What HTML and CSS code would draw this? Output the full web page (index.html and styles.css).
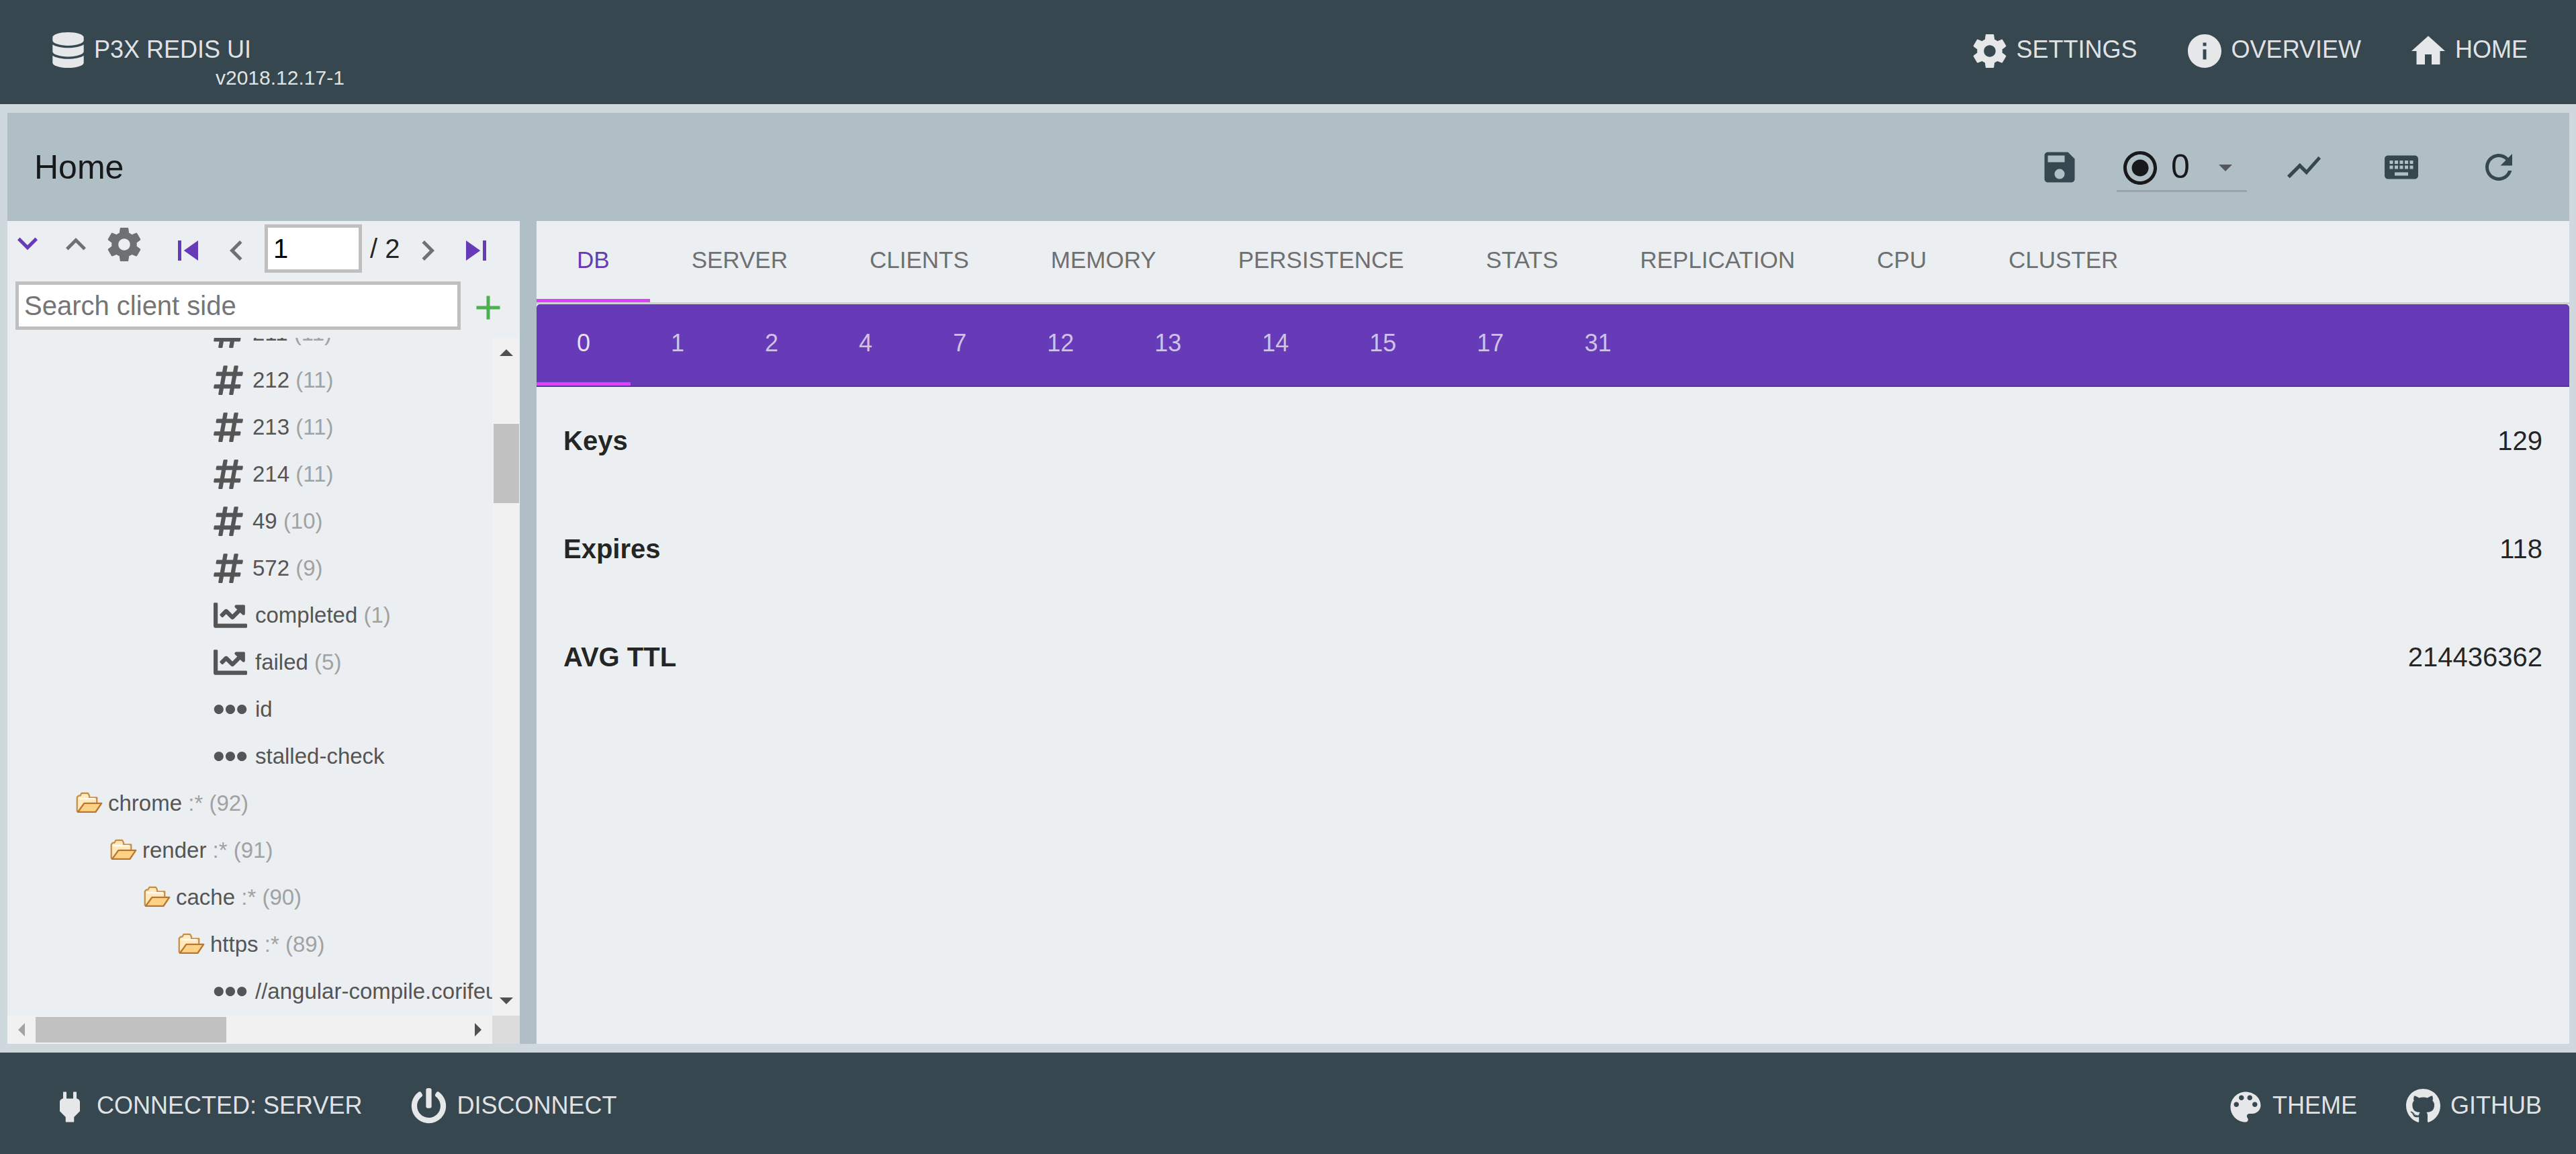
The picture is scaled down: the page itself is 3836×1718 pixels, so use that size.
FILE: index.html
```html
<!DOCTYPE html>
<html lang="en">
<head>
<meta charset="utf-8">
<title>P3X Redis UI</title>
<link rel="stylesheet" href="styles.css">
</head>
<body>
<svg class="sprite" aria-hidden="true">
  <symbol id="i-settings" viewBox="0 0 24 24"><path d="M19.43 12.98c.04-.32.07-.64.07-.98s-.03-.66-.07-.98l2.11-1.65c.19-.15.24-.42.12-.64l-2-3.46c-.12-.22-.39-.3-.61-.22l-2.49 1c-.52-.4-1.08-.73-1.69-.98l-.38-2.65C14.46 2.18 14.25 2 14 2h-4c-.25 0-.46.18-.49.42l-.38 2.65c-.61.25-1.17.59-1.69.98l-2.49-1c-.23-.09-.49 0-.61.22l-2 3.46c-.13.22-.07.49.12.64l2.11 1.65c-.04.32-.07.65-.07.98s.03.66.07.98l-2.11 1.65c-.19.15-.24.42-.12.64l2 3.46c.12.22.39.3.61.22l2.49-1c.52.4 1.08.73 1.69.98l.38 2.65c.03.24.24.42.49.42h4c.25 0 .46-.18.49-.42l.38-2.65c.61-.25 1.17-.59 1.69-.98l2.49 1c.23.09.49 0 .61-.22l2-3.46c.12-.22.07-.49-.12-.64l-2.11-1.65zM12 15.5c-1.93 0-3.5-1.57-3.5-3.5s1.57-3.5 3.5-3.5 3.5 1.57 3.5 3.5-1.57 3.5-3.5 3.5z"/></symbol>
  <symbol id="i-info" viewBox="0 0 24 24"><path d="M12 2C6.48 2 2 6.48 2 12s4.48 10 10 10 10-4.48 10-10S17.52 2 12 2zm1 15h-2v-6h2v6zm0-8h-2V7h2v2z"/></symbol>
  <symbol id="i-home" viewBox="0 0 24 24"><path d="M10 20v-6h4v6h5v-8h3L12 3 2 12h3v8z"/></symbol>
  <symbol id="i-save" viewBox="0 0 24 24"><path d="M17 3H5c-1.11 0-2 .9-2 2v14c0 1.1.89 2 2 2h14c1.1 0 2-.9 2-2V7l-4-4zm-5 16c-1.66 0-3-1.34-3-3s1.34-3 3-3 3 1.34 3 3-1.34 3-3 3zm3-10H5V5h10v4z"/></symbol>
  <symbol id="i-radio" viewBox="0 0 24 24"><path d="M12 7c-2.76 0-5 2.24-5 5s2.24 5 5 5 5-2.24 5-5-2.24-5-5-5zm0-5C6.48 2 2 6.48 2 12s4.48 10 10 10 10-4.48 10-10S17.52 2 12 2zm0 18c-4.42 0-8-3.58-8-8s3.58-8 8-8 8 3.58 8 8-3.58 8-8 8z"/></symbol>
  <symbol id="i-chart" viewBox="0 0 24 24"><path d="M3.5 18.49l6-6.01 4 4L22 6.92l-1.41-1.41-7.09 7.97-4-4L2 16.99z"/></symbol>
  <symbol id="i-keyboard" viewBox="0 0 24 24"><path d="M20 5H4c-1.1 0-1.99.9-1.99 2L2 17c0 1.1.9 2 2 2h16c1.1 0 2-.9 2-2V7c0-1.1-.9-2-2-2zm-9 3h2v2h-2V8zm0 3h2v2h-2v-2zM8 8h2v2H8V8zm0 3h2v2H8v-2zm-1 2H5v-2h2v2zm0-3H5V8h2v2zm9 7H8v-2h8v2zm0-4h-2v-2h2v2zm0-3h-2V8h2v2zm3 3h-2v-2h2v2zm0-3h-2V8h2v2z"/></symbol>
  <symbol id="i-refresh" viewBox="0 0 24 24"><path d="M17.65 6.35C16.2 4.9 14.21 4 12 4c-4.42 0-7.99 3.58-7.99 8s3.57 8 7.99 8c3.73 0 6.84-2.55 7.73-6h-2.08c-.82 2.33-3.04 4-5.65 4-3.31 0-6-2.69-6-6s2.69-6 6-6c1.66 0 3.14.69 4.22 1.78L13 11h7V4l-2.35 2.35z"/></symbol>
  <symbol id="i-down" viewBox="0 0 24 24"><path d="M7.41 7.84L12 12.42l4.59-4.58L18 9.25l-6 6-6-6z"/></symbol>
  <symbol id="i-up" viewBox="0 0 24 24"><path d="M7.41 15.41L12 10.83l4.59 4.58L18 14l-6-6-6 6z"/></symbol>
  <symbol id="i-first" viewBox="0 0 24 24"><path d="M6 6h2v12H6zm3.5 6l8.5 6V6z"/></symbol>
  <symbol id="i-prev" viewBox="0 0 24 24"><path d="M15.41 7.41L14 6l-6 6 6 6 1.41-1.41L10.83 12z"/></symbol>
  <symbol id="i-next" viewBox="0 0 24 24"><path d="M10 6L8.59 7.41 13.17 12l-4.58 4.59L10 18l6-6z"/></symbol>
  <symbol id="i-last" viewBox="0 0 24 24"><path d="M6 18l8.5-6L6 6v12zM16 6v12h2V6h-2z"/></symbol>
  <symbol id="i-add" viewBox="0 0 24 24"><path d="M19 13h-6v6h-2v-6H5v-2h6V5h2v6h6v2z"/></symbol>
  <symbol id="i-power" viewBox="0 0 24 24"><path d="M16.01 7L16 3h-2v4h-4V3H8v4h-.01C7 6.99 6 7.99 6 8.99v5.49L9.5 18v3h5v-3l3.5-3.51v-5.5c0-1-1-2-1.99-1.99z"/></symbol>
  <symbol id="i-palette" viewBox="0 0 24 24"><path d="M12 3c-4.97 0-9 4.03-9 9s4.03 9 9 9c.83 0 1.5-.67 1.5-1.5 0-.39-.15-.74-.39-1.01-.23-.26-.38-.61-.38-.99 0-.83.67-1.5 1.5-1.5H16c2.76 0 5-2.24 5-5 0-4.42-4.03-8-9-8zm-5.5 9c-.83 0-1.5-.67-1.5-1.5S5.67 9 6.5 9 8 9.67 8 10.5 7.33 12 6.5 12zm3-4C8.67 8 8 7.33 8 6.5S8.67 5 9.5 5s1.5.67 1.5 1.5S10.33 8 9.5 8zm5 0c-.83 0-1.5-.67-1.5-1.5S13.67 5 14.5 5s1.5.67 1.5 1.5S15.33 8 14.5 8zm3 4c-.83 0-1.5-.67-1.5-1.5S16.67 9 17.5 9s1.5.67 1.5 1.5-.67 1.5-1.5 1.5z"/></symbol>
  <symbol id="i-database" viewBox="0 0 448 512"><path d="M448 73.143v45.714C448 159.143 347.667 192 224 192S0 159.143 0 118.857V73.143C0 32.857 100.333 0 224 0s224 32.857 224 73.143zM448 176v102.857C448 319.143 347.667 352 224 352S0 319.143 0 278.857V176c48.125 33.143 136.208 48.572 224 48.572S399.874 209.143 448 176zm0 160v102.857C448 479.143 347.667 512 224 512S0 479.143 0 438.857V336c48.125 33.143 136.208 48.572 224 48.572S399.874 369.143 448 336z"/></symbol>
  <symbol id="i-off" viewBox="0 0 512 512"><path d="M400 54.1c63 45 104 118.6 104 201.9 0 136.8-110.8 247.7-247.5 248C120 504.3 8.2 393 8 256.4 7.9 173.1 48.9 99.3 111.8 54.2c11.7-8.3 28-4.8 35 7.7L162.6 90c5.9 10.5 3.1 23.8-6.6 31-41.5 30.8-68 79.6-68 134.9-.1 92.3 74.5 168.1 168 168.1 91.6 0 168.6-74.2 168-169.1-.3-51.8-24.7-101.8-68.1-134-9.7-7.2-12.4-20.5-6.5-30.9l15.8-28.1c7-12.4 23.2-16.1 34.8-7.8zM296 264V24c0-13.3-10.7-24-24-24h-32c-13.3 0-24 10.7-24 24v240c0 13.3 10.7 24 24 24h32c13.3 0 24-10.7 24-24z"/></symbol>
  <symbol id="i-github" viewBox="0 0 496 512"><path d="M165.9 397.4c0 2-2.3 3.6-5.2 3.6-3.3.3-5.6-1.3-5.6-3.6 0-2 2.3-3.6 5.2-3.6 3-.3 5.6 1.3 5.6 3.6zm-31.1-4.5c-.7 2 1.3 4.3 4.3 4.9 2.6 1 5.6 0 6.2-2s-1.3-4.3-4.3-5.2c-2.6-.7-5.5.3-6.2 2.3zm44.2-1.7c-2.9.7-4.9 2.6-4.6 4.9.3 2 2.9 3.3 5.9 2.6 2.9-.7 4.9-2.6 4.6-4.6-.3-1.9-3-3.2-5.9-2.9zM244.8 8C106.1 8 0 113.3 0 252c0 110.9 69.8 205.8 169.5 239.2 12.8 2.3 17.3-5.6 17.3-12.1 0-6.2-.3-40.4-.3-61.4 0 0-70 15-84.7-29.8 0 0-11.4-29.1-27.8-36.6 0 0-22.9-15.7 1.6-15.4 0 0 24.9 2 38.6 25.8 21.9 38.6 58.6 27.5 72.9 20.9 2.3-16 8.8-27.1 16-33.7-55.9-6.2-112.3-14.3-112.3-110.5 0-27.5 7.6-41.3 23.6-58.9-2.6-6.5-11.1-33.3 2.6-67.9 20.9-6.5 69 27 69 27 20-5.6 41.5-8.5 62.8-8.5s42.8 2.9 62.8 8.5c0 0 48.1-33.6 69-27 13.7 34.7 5.2 61.4 2.6 67.9 16 17.7 25.8 31.5 25.8 58.9 0 96.5-58.9 104.2-114.8 110.5 9.2 7.9 17 22.9 17 46.4 0 33.7-.3 75.4-.3 83.6 0 6.5 4.6 14.4 17.3 12.1C428.2 457.8 496 362.9 496 252 496 113.3 383.5 8 244.8 8zM97.2 352.9c-1.3 1-1 3.3.7 5.2 1.6 1.6 3.9 2.3 5.2 1 1.3-1 1-3.3-.7-5.2-1.6-1.6-3.9-2.3-5.2-1zm-10.8-8.1c-.7 1.3.3 2.9 2.3 3.9 1.6 1 3.6.7 4.3-.7.7-1.3-.3-2.9-2.3-3.9-2-.6-3.6-.3-4.3.7zm32.4 35.6c-1.6 1.3-1 4.3 1.3 6.2 2.3 2.3 5.2 2.6 6.5 1 1.3-1.3.7-4.3-1.3-6.2-2.2-2.3-5.2-2.6-6.5-1zm-11.4-14.7c-1.6 1-1.6 3.6 0 5.9 1.6 2.3 4.3 3.3 5.6 2.3 1.6-1.3 1.6-3.9 0-6.2-1.4-2.3-4-3.3-5.6-2z"/></symbol>
  <symbol id="i-hash" viewBox="0 0 448 512"><path d="M440.667 182.109l7.143-40c1.313-7.355-4.342-14.109-11.813-14.109h-74.81l14.623-81.891C377.123 38.754 371.468 32 363.997 32h-40.632a12 12 0 0 0-11.813 9.891L296.175 128H197.54l14.623-81.891C213.477 38.754 207.822 32 200.35 32h-40.632a12 12 0 0 0-11.813 9.891L132.528 128H53.432a12 12 0 0 0-11.813 9.891l-7.143 40C33.163 185.246 38.818 192 46.289 192h74.81L98.242 320H19.146a12 12 0 0 0-11.813 9.891l-7.143 40C-1.123 377.246 4.532 384 12.003 384h74.81L72.19 465.891C70.877 473.246 76.532 480 84.003 480h40.632a12 12 0 0 0 11.813-9.891L151.826 384h98.634l-14.623 81.891C234.523 473.246 240.178 480 247.65 480h40.632a12 12 0 0 0 11.813-9.891L315.472 384h79.096a12 12 0 0 0 11.813-9.891l7.143-40c1.313-7.355-4.342-14.109-11.813-14.109h-74.81l22.857-128h79.096a12 12 0 0 0 11.813-9.891zM261.889 320h-98.634l22.857-128h98.634l-22.857 128z"/></symbol>
  <symbol id="i-line" viewBox="0 0 512 512"><path d="M496 384H64V80c0-8.84-7.16-16-16-16H16C7.16 64 0 71.16 0 80v336c0 17.67 14.33 32 32 32h464c8.84 0 16-7.16 16-16v-32c0-8.84-7.16-16-16-16zM464 96H345.94c-21.38 0-32.09 25.85-16.97 40.97l32.4 32.4L288 242.75l-73.37-73.37c-12.5-12.5-32.76-12.5-45.25 0l-68.69 68.69c-6.25 6.25-6.25 16.38 0 22.63l22.62 22.62c6.25 6.25 16.38 6.25 22.63 0L192 237.25l73.37 73.37c12.5 12.5 32.76 12.5 45.25 0l96-96 32.4 32.4c15.12 15.12 40.97 4.41 40.97-16.97V112c.01-8.84-7.15-16-15.99-16z"/></symbol>
  <symbol id="i-dots" viewBox="0 0 512 512"><path d="M328 256c0 39.8-32.2 72-72 72s-72-32.2-72-72 32.2-72 72-72 72 32.2 72 72zm104-72c-39.8 0-72 32.2-72 72s32.2 72 72 72 72-32.2 72-72-32.2-72-72-72zm-352 0c-39.8 0-72 32.2-72 72s32.2 72 72 72 72-32.2 72-72-32.2-72-72-72z"/></symbol>
  <symbol id="i-folder" viewBox="0 0 16 16">
    <path d="M.7 12.6V4.4L1.6 3.4h1L3.400 1.900h3.800L8 3.400V4.500h4.500V7.500L11.500 13.100H1.200z" fill="#ffe9bd" stroke="#c98c45" stroke-width=".9" stroke-linejoin="round"/>
    <path d="M1.200 13.100L5 7.900h10.300L11.800 13.100z" fill="#ffd184" stroke="#b9772f" stroke-width=".9" stroke-linejoin="round"/>
    <path d="M1.700 5.200h9.800" stroke="#fffaf0" stroke-width=".9"/>
  </symbol>
</svg>

<header class="topbar">
  <div class="brand">
    <a class="navlink navlink-fa" href="#"><svg class="icon icon-db"><use href="#i-database"/></svg>P3X REDIS UI</a>
    <span class="version">v2018.12.17-1</span>
  </div>
  <nav class="navgroup">
    <a class="navlink" href="#"><svg class="icon"><use href="#i-settings"/></svg>SETTINGS</a>
    <a class="navlink" href="#"><svg class="icon"><use href="#i-info"/></svg>OVERVIEW</a>
    <a class="navlink" href="#"><svg class="icon"><use href="#i-home"/></svg>HOME</a>
  </nav>
</header>

<main class="content">
  <div class="titlebar">
    <h1 class="title">Home</h1>
    <div class="tools">
      <button class="iconbtn" aria-label="Save"><svg class="icon"><use href="#i-save"/></svg></button>
      <label class="dbselect">
        <svg class="icon"><use href="#i-radio"/></svg>
        <select aria-label="Database"><option>0</option><option>1</option><option>2</option></select>
        <span class="caret"></span>
      </label>
      <div class="toolgroup">
        <button class="iconbtn" aria-label="Statistics"><svg class="icon"><use href="#i-chart"/></svg></button>
        <button class="iconbtn" aria-label="Console"><svg class="icon"><use href="#i-keyboard"/></svg></button>
        <button class="iconbtn" aria-label="Refresh"><svg class="icon"><use href="#i-refresh"/></svg></button>
      </div>
    </div>
  </div>

  <div class="split">
    <aside class="sidebar">
      <div class="controls">
        <div class="treebtns">
          <button class="iconbtn accent" aria-label="Expand all"><svg class="icon"><use href="#i-down"/></svg></button>
          <button class="iconbtn muted" aria-label="Collapse all"><svg class="icon"><use href="#i-up"/></svg></button>
          <button class="iconbtn muted" aria-label="Tree settings"><svg class="icon"><use href="#i-settings"/></svg></button>
        </div>
        <div class="pager">
          <button class="iconbtn accent" aria-label="First page"><svg class="icon"><use href="#i-first"/></svg></button>
          <button class="iconbtn muted" aria-label="Previous page"><svg class="icon"><use href="#i-prev"/></svg></button>
          <input class="field page" type="text" value="1" aria-label="Page">
          <span class="pages">/ 2</span>
          <button class="iconbtn muted" aria-label="Next page"><svg class="icon"><use href="#i-next"/></svg></button>
          <button class="iconbtn accent" aria-label="Last page"><svg class="icon"><use href="#i-last"/></svg></button>
        </div>
      </div>
      <div class="search">
        <input class="field" type="text" placeholder="Search client side" aria-label="Search client side">
        <button class="iconbtn add" aria-label="Add key"><svg class="icon"><use href="#i-add"/></svg></button>
      </div>
      <div class="treepane">
        <div class="viewport">
          <ul class="tree">
            <li class="node leaf"><svg class="glyph hash"><use href="#i-hash"/></svg><span>211 <small>(11)</small></span></li>
            <li class="node leaf"><svg class="glyph hash"><use href="#i-hash"/></svg><span>212 <small>(11)</small></span></li>
            <li class="node leaf"><svg class="glyph hash"><use href="#i-hash"/></svg><span>213 <small>(11)</small></span></li>
            <li class="node leaf"><svg class="glyph hash"><use href="#i-hash"/></svg><span>214 <small>(11)</small></span></li>
            <li class="node leaf"><svg class="glyph hash"><use href="#i-hash"/></svg><span>49 <small>(10)</small></span></li>
            <li class="node leaf"><svg class="glyph hash"><use href="#i-hash"/></svg><span>572 <small>(9)</small></span></li>
            <li class="node leaf"><svg class="glyph"><use href="#i-line"/></svg><span>completed <small>(1)</small></span></li>
            <li class="node leaf"><svg class="glyph"><use href="#i-line"/></svg><span>failed <small>(5)</small></span></li>
            <li class="node leaf"><svg class="glyph"><use href="#i-dots"/></svg><span>id</span></li>
            <li class="node leaf"><svg class="glyph"><use href="#i-dots"/></svg><span>stalled-check</span></li>
            <li class="node level-1"><svg class="folder"><use href="#i-folder"/></svg><span>chrome <small>:* (92)</small></span></li>
            <li class="node level-2"><svg class="folder"><use href="#i-folder"/></svg><span>render <small>:* (91)</small></span></li>
            <li class="node level-3"><svg class="folder"><use href="#i-folder"/></svg><span>cache <small>:* (90)</small></span></li>
            <li class="node level-4"><svg class="folder"><use href="#i-folder"/></svg><span>https <small>:* (89)</small></span></li>
            <li class="node leaf"><svg class="glyph"><use href="#i-dots"/></svg><span>//angular-compile.corifeus.com</span></li>
          </ul>
        </div>
        <div class="vbar"><i class="arrow up"></i><i class="vthumb"></i><i class="arrow down"></i></div>
        <div class="hbar"><i class="arrow left"></i><i class="hthumb"></i><i class="arrow right"></i></div>
        <div class="corner"></div>
      </div>
    </aside>

    <section class="details">
      <div class="tabs" role="tablist">
        <button class="tab active" role="tab">DB</button>
        <button class="tab" role="tab">SERVER</button>
        <button class="tab" role="tab">CLIENTS</button>
        <button class="tab" role="tab">MEMORY</button>
        <button class="tab" role="tab">PERSISTENCE</button>
        <button class="tab" role="tab">STATS</button>
        <button class="tab" role="tab">REPLICATION</button>
        <button class="tab" role="tab">CPU</button>
        <button class="tab" role="tab">CLUSTER</button>
      </div>
      <div class="tabs subtabs" role="tablist">
        <button class="tab active" role="tab">0</button>
        <button class="tab" role="tab">1</button>
        <button class="tab" role="tab">2</button>
        <button class="tab" role="tab">4</button>
        <button class="tab" role="tab">7</button>
        <button class="tab" role="tab">12</button>
        <button class="tab" role="tab">13</button>
        <button class="tab" role="tab">14</button>
        <button class="tab" role="tab">15</button>
        <button class="tab" role="tab">17</button>
        <button class="tab" role="tab">31</button>
      </div>
      <dl class="stats">
        <div class="stat"><dt>Keys</dt><dd>129</dd></div>
        <div class="stat"><dt>Expires</dt><dd>118</dd></div>
        <div class="stat"><dt>AVG TTL</dt><dd>214436362</dd></div>
      </dl>
    </section>
  </div>
</main>

<footer class="bottombar">
  <div class="navgroup">
    <a class="navlink" href="#"><svg class="icon"><use href="#i-power"/></svg>CONNECTED: SERVER</a>
    <a class="navlink navlink-fa" href="#"><svg class="icon icon-off"><use href="#i-off"/></svg>DISCONNECT</a>
  </div>
  <div class="navgroup">
    <a class="navlink" href="#"><svg class="icon"><use href="#i-palette"/></svg>THEME</a>
    <a class="navlink navlink-fa" href="#"><svg class="icon icon-gh"><use href="#i-github"/></svg>GITHUB</a>
  </div>
</footer>
</body>
</html>
```
FILE: styles.css
```css
* { box-sizing: border-box; }

body {
  margin: 0;
  height: 100vh;
  display: flex;
  flex-direction: column;
  background: #cfd8dc;
  color: rgba(0, 0, 0, 0.87);
  font: 40px "Liberation Sans", Arial, sans-serif;
  overflow: hidden;
}

.sprite { display: none; }

button, input, select {
  font: inherit;
  color: inherit;
  margin: 0;
  padding: 0;
  border: 0;
  background: none;
}

.icon {
  display: block;
  flex: none;
  width: 60px;
  height: 60px;
  fill: currentColor;
}

/* Header and footer */
.topbar, .bottombar {
  flex: none;
  display: flex;
  justify-content: space-between;
  background: #37474f;
  color: rgba(255, 255, 255, 0.87);
}

.topbar { padding: 44px 72px 27px 78px; }
.bottombar { padding: 49px 51px 42px 74px; }

.brand { display: flex; flex-direction: column; }

.version {
  padding-left: 243px;
  font-size: 30px;
  line-height: 24px;
}

.navgroup { display: flex; gap: 70px; }
.bottombar .navgroup { gap: 73px; }

.navlink {
  display: flex;
  align-items: center;
  gap: 10px;
  height: 60px;
  font-size: 36px;
  color: inherit;
  text-decoration: none;
}

.navlink .icon { margin-top: 4px; }
.navlink-fa { gap: 15px; }
.navlink-fa .icon { height: 53px; margin-top: 0; }
.navlink .icon-db { width: 47px; }
.navlink .icon-off { width: 53px; }
.navlink .icon-gh { width: 51px; }

/* Content frame */
.content {
  flex: 1;
  min-height: 0;
  display: flex;
  flex-direction: column;
  padding: 13px 10px 13px 11px;
}

.titlebar {
  flex: none;
  display: flex;
  align-items: center;
  justify-content: space-between;
  height: 161px;
  padding: 0 75px 0 40px;
  background: #b0bec5;
}

.title { margin: 0; font-size: 50px; font-weight: 400; }

.tools { display: flex; align-items: center; gap: 55px; }
.toolgroup { display: flex; gap: 85px; }
.iconbtn { flex: none; color: #37474f; }

.dbselect {
  position: relative;
  display: flex;
  align-items: center;
  gap: 16px;
  width: 194px;
  height: 74px;
  padding: 6px 0 0 5px;
  border-bottom: 3px solid rgba(0, 0, 0, 0.12);
  font-size: 50px;
}

.dbselect select {
  flex: 1;
  min-width: 0;
  height: 60px;
  padding-bottom: 4px;
  appearance: none;
}

.caret {
  position: absolute;
  right: 22px;
  top: 33px;
  border: 10px solid transparent;
  border-top-color: rgba(0, 0, 0, 0.54);
  border-bottom: 0;
  pointer-events: none;
}

.split {
  flex: 1;
  min-height: 0;
  display: grid;
  grid-template-columns: 20% 1fr;
  gap: 25px;
  background: #b0bec5;
}

/* Key tree */
.sidebar {
  min-width: 0;
  min-height: 0;
  display: flex;
  flex-direction: column;
  background: #eceff1;
  padding-top: 5px;
}

.controls { display: flex; gap: 35px; margin-bottom: 13px; }
.treebtns { display: flex; gap: 12px; align-items: flex-start; }
.pager { display: flex; gap: 12px; align-items: center; }
.pager .iconbtn, .search .iconbtn { margin-top: 6px; }
.sidebar .accent { color: #673ab7; }
.sidebar .muted { color: #6e7071; }
.sidebar .add { color: #4caf50; }

.field {
  flex: 1;
  min-width: 0;
  height: 72px;
  padding: 0 8px;
  border: 5px solid #bfbfbf;
  background: #fff;
  color: #000;
}

.field::placeholder { color: #757575; }
.page { flex: none; width: 145px; }

.search {
  display: flex;
  align-items: center;
  gap: 11px;
  padding: 0 17px 0 12px;
  margin-bottom: 12px;
}

.treepane {
  flex: 1;
  min-height: 0;
  display: grid;
  grid-template: minmax(0, 1fr) 42px / minmax(0, 1fr) 41px;
}

.viewport { overflow: hidden; }

/* The list is scrolled part of a row down */
.tree {
  list-style: none;
  margin: -42px 0 0;
  padding: 0;
  font-size: 33px;
  color: #555;
}

.node {
  display: flex;
  align-items: center;
  gap: 12px;
  height: 70px;
  white-space: nowrap;
}

.node small { font-size: inherit; color: #a1a2a3; }
.leaf { padding-left: 307px; }
.level-1 { padding-left: 102px; }
.level-2 { padding-left: 153px; }
.level-3 { padding-left: 203px; }
.level-4 { padding-left: 254px; }
.level-1, .level-2, .level-3, .level-4 { gap: 8px; }

.glyph { flex: none; width: 50px; height: 50px; fill: #555; }
.hash { width: 44px; margin-right: 2px; }
.folder { flex: none; width: 40px; height: 40px; }

.vbar, .hbar {
  display: flex;
  align-items: center;
  background: #f1f1f1;
}

.vbar { flex-direction: column; padding: 17px 0; }
.hbar { padding: 0 16px; }
.vthumb { width: 38px; height: 118px; margin: 101px 0 auto; background: #c1c1c1; }
.hthumb { width: 284px; height: 38px; margin: 0 auto 0 16px; background: #c1c1c1; }
.corner { background: #dcdcdc; }

.arrow { border: 10px solid transparent; }
.arrow.up { border-top: 0; border-bottom-color: #505050; }
.arrow.down { border-bottom: 0; border-top-color: #505050; }
.arrow.left { border-left: 0; border-right-color: #a3a3a3; }
.arrow.right { border-right: 0; border-left-color: #505050; }

/* Statistics */
.details { min-width: 0; background: #eceff1; }

.tabs {
  display: flex;
  gap: 2px;
  height: 124px;
  border-bottom: 3px solid #cfd2d4;
  font-size: 35px;
  color: #6e7071;
}

.tab {
  padding: 0 60px 3px;
  border-bottom: 5px solid transparent;
  border-top: 3px solid transparent;
}

.tab.active { color: #673ab7; border-bottom-color: #e040fb; }

.subtabs {
  gap: 0;
  height: 123px;
  border-bottom: 2px solid #5a32a2;
  border-radius: 5px 5px 0 0;
  background: #673ab7;
  font-size: 36px;
  color: rgba(255, 255, 255, 0.7);
}

.subtabs .tab.active { color: rgba(255, 255, 255, 0.87); }

.stats { margin: 0; }

.stat {
  display: flex;
  align-items: center;
  justify-content: space-between;
  height: 161px;
  padding: 0 40px;
}

.stat dt { font-weight: 700; }
.stat dd { margin: 0; }
```
